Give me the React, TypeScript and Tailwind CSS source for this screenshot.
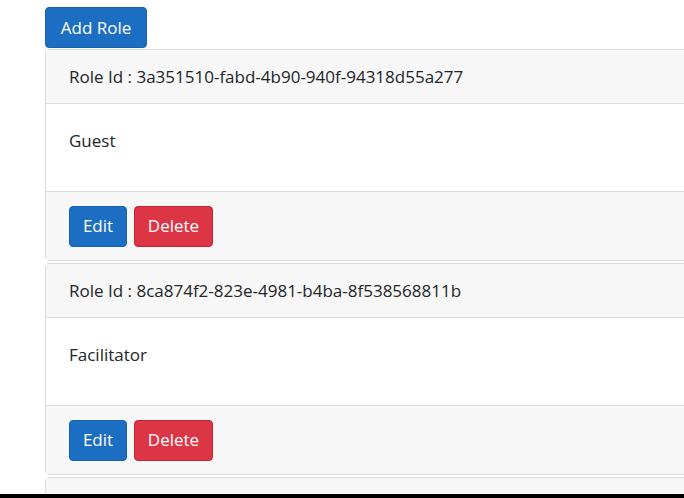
const roles = [
  { id: '3a351510-fabd-4b90-940f-94318d55a277', name: 'Guest' },
  { id: '8ca874f2-823e-4981-b4ba-8f538568811b', name: 'Facilitator' },
  { id: 'c1f0a7d3-5e42-4b6a-9d1e-2a7b3c4d5e6f', name: 'Administrator' },
];

function RoleCard({ id, name }: { id: string; name: string }) {
  return (
    <div className="w-[700px] shrink-0 rounded-[4px] border border-[#dcdcdc] bg-white">
      <div className="flex h-[54px] items-center border-b border-[#dcdcdc] bg-[#f7f7f7] px-[23px]">
        Role Id : {id}
      </div>
      <div className="flex h-[87px] items-center px-[23px] pb-[14px]">{name}</div>
      <div className="flex h-[69px] items-center gap-[7px] border-t border-[#dcdcdc] bg-[#f7f7f7] px-[23px]">
        <button
          type="button"
          className="h-[41px] w-[58px] rounded-[4px] border border-[#1861ac] bg-[#1b6ec2] text-white"
        >
          Edit
        </button>
        <button
          type="button"
          className="h-[41px] w-[79px] rounded-[4px] border border-[#c82333] bg-[#dc3545] text-white"
        >
          Delete
        </button>
      </div>
    </div>
  );
}

export default function App() {
  return (
    <div className="flex h-[498px] w-[684px] flex-col overflow-hidden bg-white font-['Open_Sans',sans-serif] text-[17px] text-[#212529]">
      <div className="flex h-[494px] flex-col gap-[2px] overflow-hidden pl-[45px] pt-[7px]">
        <button
          type="button"
          className="-mb-[1px] h-[41px] w-[102px] shrink-0 rounded-[4px] border border-[#1861ac] bg-[#1b6ec2] text-white"
        >
          Add Role
        </button>
        {roles.map((r) => (
          <RoleCard key={r.id} id={r.id} name={r.name} />
        ))}
      </div>
      <div className="h-[4px] bg-black" />
    </div>
  );
}
